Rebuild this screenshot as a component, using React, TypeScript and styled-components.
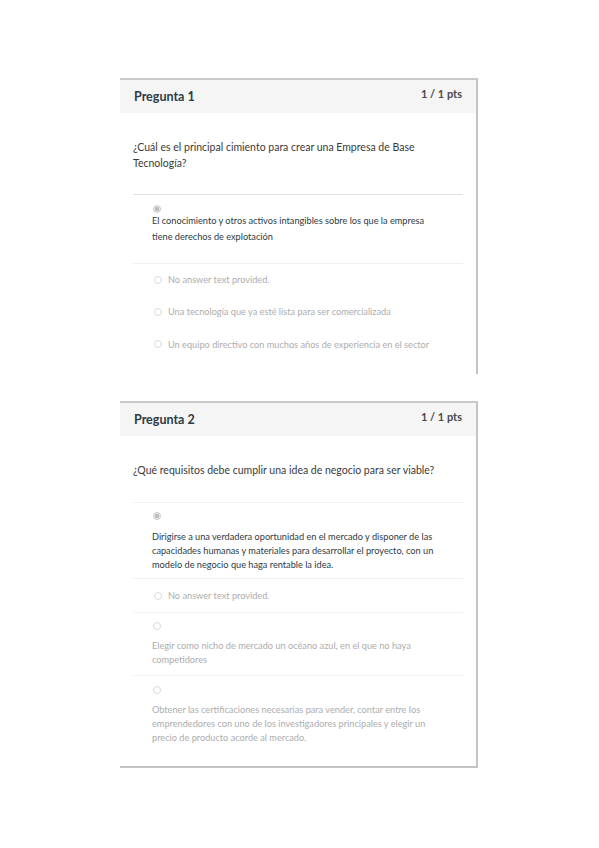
import React from "react";
import styled, { createGlobalStyle } from "styled-components";

const GlobalStyle = createGlobalStyle`
  body {
    margin: 0;
    background: #ffffff;
    font-family: Lato, "Noto Sans", sans-serif;
  }
`;

interface Option {
  text: string;
  selected?: boolean;
  stacked?: boolean;
  lineHeight?: number;
  padTop?: number;
  gap?: number;
  padBottom?: number;
  rowHeight?: number;
}

interface QuestionData {
  title: string;
  points: string;
  question: string;
  questionPadBottom: number;
  dividerColor: string;
  rowDividers: boolean;
  options: Option[];
  bottomBorder?: boolean;
  endPad: number;
}

const questions: QuestionData[] = [
  {
    title: "Pregunta 1",
    points: "1 / 1 pts",
    question:
      "¿Cuál es el principal cimiento para crear una Empresa de Base Tecnología?",
    questionPadBottom: 23,
    dividerColor: "#e0e0e0",
    rowDividers: false,
    endPad: 14,
    options: [
      {
        text: "El conocimiento y otros activos intangibles sobre los que la empresa tiene derechos de explotación",
        selected: true,
        stacked: true,
        lineHeight: 16,
        padTop: 10,
        gap: 0,
        padBottom: 18,
      },
      { text: "No answer text provided.", rowHeight: 32 },
      {
        text: "Una tecnología que ya esté lista para ser comercializada",
        rowHeight: 32,
      },
      {
        text: "Un equipo directivo con muchos años de experiencia en el sector",
        rowHeight: 32,
      },
    ],
  },
  {
    title: "Pregunta 2",
    points: "1 / 1 pts",
    question: "¿Qué requisitos debe cumplir una idea de negocio para ser viable?",
    questionPadBottom: 24,
    dividerColor: "#f1f1f1",
    rowDividers: true,
    bottomBorder: true,
    endPad: 21,
    options: [
      {
        text: "Dirigirse a una verdadera oportunidad en el mercado y disponer de las capacidades humanas y materiales para desarrollar el proyecto, con un modelo de negocio que haga rentable la idea.",
        selected: true,
        stacked: true,
        lineHeight: 14,
        padTop: 9,
        gap: 10,
        padBottom: 6,
      },
      { text: "No answer text provided.", rowHeight: 34 },
      {
        text: "Elegir como nicho de mercado un océano azul, en el que no haya competidores",
        stacked: true,
        lineHeight: 14,
        padTop: 9,
        gap: 9,
        padBottom: 8,
      },
      {
        text: "Obtener las certificaciones necesarias para vender, contar entre los emprendedores con uno de los investigadores principales y elegir un precio de producto acorde al mercado.",
        stacked: true,
        lineHeight: 14,
        padTop: 10,
        gap: 9,
        padBottom: 0,
      },
    ],
  },
];

const QuestionCard: React.FC<{ data: QuestionData }> = ({ data }) => (
  <Card $bottomBorder={data.bottomBorder}>
    <Header>
      <Title>{data.title}</Title>
      <Points>{data.points}</Points>
    </Header>
    <Body $endPad={data.endPad}>
      <QuestionText
        $padBottom={data.questionPadBottom}
        $divider={data.dividerColor}
      >
        {data.question}
      </QuestionText>
      {data.options.map((opt, i) =>
        opt.stacked ? (
          <StackedAnswer
            key={i}
            $padTop={opt.padTop ?? 10}
            $padBottom={opt.padBottom ?? 10}
          >
            <Radio $selected={opt.selected} />
            <AnswerText
              $selected={opt.selected}
              $lineHeight={opt.lineHeight ?? 16}
              $gap={opt.gap ?? 0}
            >
              {opt.text}
            </AnswerText>
          </StackedAnswer>
        ) : (
          <InlineAnswer
            key={i}
            $height={opt.rowHeight ?? 32}
            $divider={data.rowDividers}
          >
            <Radio $selected={opt.selected} />
            <InlineText>{opt.text}</InlineText>
          </InlineAnswer>
        )
      )}
    </Body>
  </Card>
);

const App: React.FC = () => (
  <>
    <GlobalStyle />
    <Page>
      {questions.map((q) => (
        <QuestionCard key={q.title} data={q} />
      ))}
    </Page>
  </>
);

export default App;

const Page = styled.div`
  display: flex;
  flex-direction: column;
  gap: 27px;
  padding: 78px 0 0 120px;
  width: 358px;
`;

const Card = styled.div<{ $bottomBorder?: boolean }>`
  border-top: 2px solid #c9c9c9;
  border-right: 2px solid #c4c4c4;
  border-bottom: ${(p) => (p.$bottomBorder ? "2px solid #c4c4c4" : "none")};
  background: #ffffff;
`;

const Header = styled.div`
  display: flex;
  justify-content: space-between;
  align-items: flex-start;
  height: 33px;
  padding: 0 14px;
  background: #f5f5f5;
`;

const Title = styled.div`
  font-size: 12.5px;
  font-weight: 700;
  color: #2d3b45;
  line-height: 33px;
`;

const Points = styled.div`
  font-size: 11px;
  font-weight: 700;
  color: #4a4a4a;
  padding-top: 7px;
`;

const Body = styled.div<{ $endPad: number }>`
  padding: 26px 13px ${(p) => p.$endPad}px 13px;
`;

const QuestionText = styled.div<{ $padBottom: number; $divider: string }>`
  font-size: 10.5px;
  line-height: 16px;
  color: #3a3a3a;
  padding-bottom: ${(p) => p.$padBottom}px;
  border-bottom: 1px solid ${(p) => p.$divider};
`;

const StackedAnswer = styled.div<{ $padTop: number; $padBottom: number }>`
  display: flex;
  flex-direction: column;
  align-items: flex-start;
  padding: ${(p) => p.$padTop}px 0 ${(p) => p.$padBottom}px 19px;
  border-bottom: 1px solid #f0f0f0;

  &:last-child {
    border-bottom: none;
  }
`;

const Radio = styled.span<{ $selected?: boolean }>`
  flex: none;
  width: 8px;
  height: 8px;
  margin-left: 1px;
  border-radius: 50%;
  box-sizing: border-box;
  border: 1px solid ${(p) => (p.$selected ? "#c8c8c8" : "#dadada")};
  background: ${(p) =>
    p.$selected
      ? "radial-gradient(circle, #bdbdbd 0 2px, #ececec 2.5px)"
      : "#ffffff"};
`;

const AnswerText = styled.div<{
  $selected?: boolean;
  $lineHeight: number;
  $gap: number;
}>`
  margin-top: ${(p) => p.$gap}px;
  font-size: 9.2px;
  line-height: ${(p) => p.$lineHeight}px;
  color: ${(p) => (p.$selected ? "#2d3b45" : "#adadad")};
  max-width: 285px;
`;

const InlineAnswer = styled.div<{ $height: number; $divider: boolean }>`
  box-sizing: border-box;
  display: flex;
  align-items: center;
  gap: 6px;
  height: ${(p) => p.$height}px;
  padding-left: 20px;
  border-bottom: 1px solid ${(p) => (p.$divider ? "#f3f3f3" : "transparent")};

  &:last-child {
    border-bottom: none;
  }
`;

const InlineText = styled.span`
  font-size: 9.2px;
  color: #adadad;
`;
